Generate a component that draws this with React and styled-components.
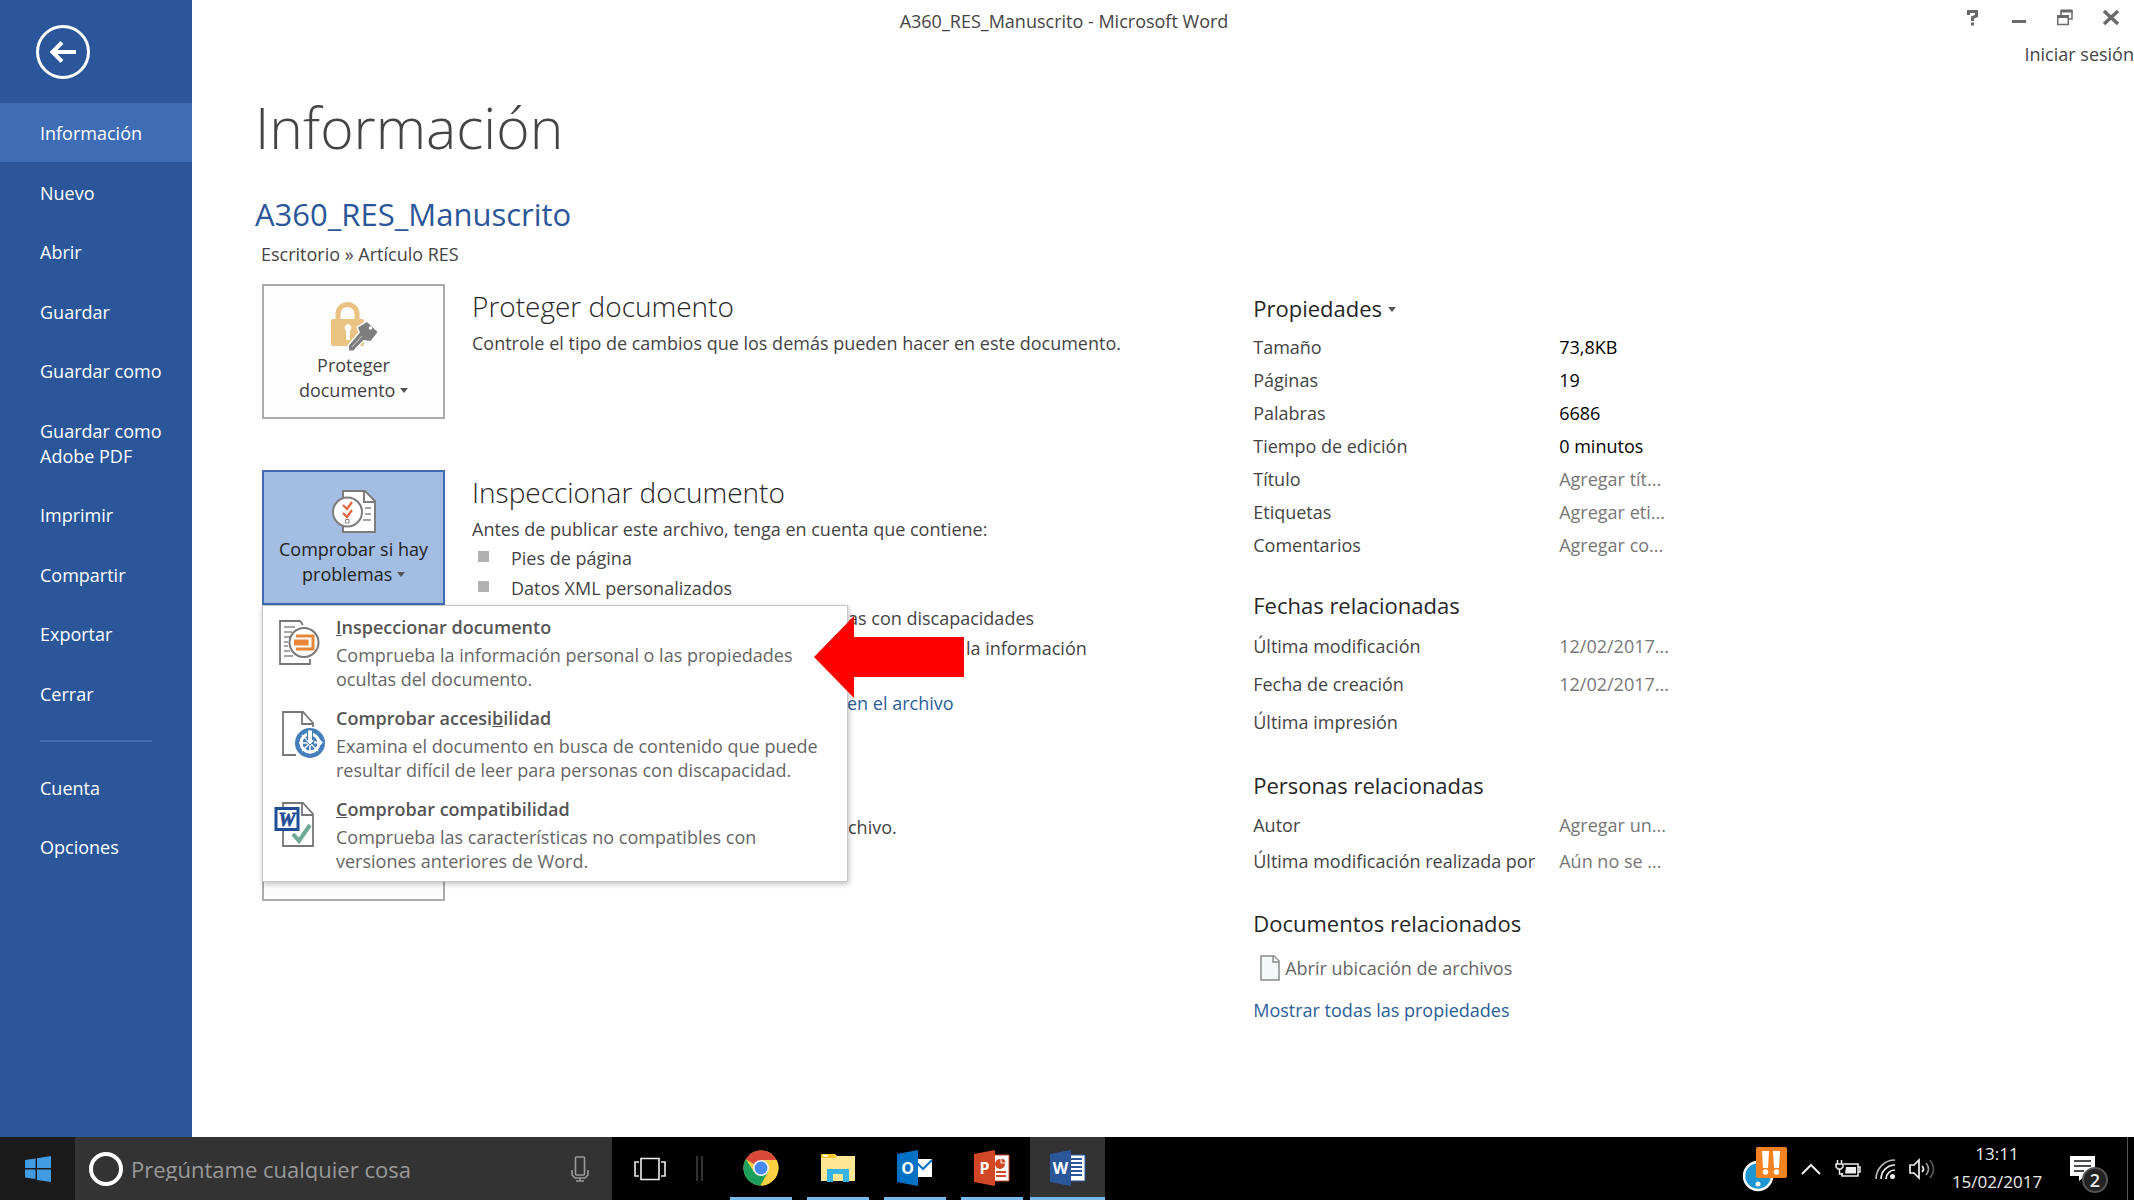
import React from 'react'
import styled, { createGlobalStyle } from 'styled-components'

const menuTop = ['Información', 'Nuevo', 'Abrir', 'Guardar', 'Guardar como', 'Guardar como Adobe PDF', 'Imprimir', 'Compartir', 'Exportar', 'Cerrar']
const menuBottom = ['Cuenta', 'Opciones']

const properties = [
  { label: 'Tamaño', value: '73,8KB' },
  { label: 'Páginas', value: '19' },
  { label: 'Palabras', value: '6686' },
  { label: 'Tiempo de edición', value: '0 minutos' },
  { label: 'Título', placeholder: 'Agregar tít...' },
  { label: 'Etiquetas', placeholder: 'Agregar eti...' },
  { label: 'Comentarios', placeholder: 'Agregar co...' },
]

const dates = [
  { label: 'Última modificación', value: '12/02/2017...', muted: true },
  { label: 'Fecha de creación', value: '12/02/2017...', muted: true },
  { label: 'Última impresión', value: '' },
]

const people = [
  { label: 'Autor', placeholder: 'Agregar un...' },
  { label: 'Última modificación realizada por', value: 'Aún no se ...', muted: true },
]

const App = () => {
  return (
    <Screen>
      <GlobalStyle />
      <Backstage>
        <Sidebar>
          <BackButton aria-label="Atrás">
            <BackIcon />
          </BackButton>
          <nav>
            <NavGroup>
              {menuTop.map((item, i) => (
                <NavItem href="#" key={item} $active={i === 0}>{item}</NavItem>
              ))}
            </NavGroup>
            <Divider />
            {menuBottom.map((item) => (
              <NavItem href="#" key={item}>{item}</NavItem>
            ))}
          </nav>
        </Sidebar>

        <Main>
          <TitleBar>
            <WindowTitle>A360_RES_Manuscrito - Microsoft Word</WindowTitle>
            <WindowTools>
              <WindowButtons>
                <WindowButton aria-label="Ayuda"><HelpIcon /></WindowButton>
                <WindowButton aria-label="Minimizar"><MinimizeIcon /></WindowButton>
                <WindowButton aria-label="Restaurar"><RestoreIcon /></WindowButton>
                <WindowButton aria-label="Cerrar ventana"><CloseIcon /></WindowButton>
              </WindowButtons>
              <SignIn href="#">Iniciar sesión</SignIn>
            </WindowTools>
          </TitleBar>

          <Page>
            <PageTitle>Información</PageTitle>
            <DocTitle>A360_RES_Manuscrito</DocTitle>
            <Path>Escritorio » Artículo RES</Path>

            <Columns>
              <Sections>
                <Section>
                  <BigButton>
                    <LockIcon />
                    <span>Proteger<br />documento <Caret /></span>
                  </BigButton>
                  <SectionText>
                    <SectionTitle>Proteger documento</SectionTitle>
                    <p>Controle el tipo de cambios que los demás pueden hacer en este documento.</p>
                  </SectionText>
                </Section>

                <Section>
                  <MenuAnchor>
                    <BigButton $open aria-expanded="true">
                      <CheckDocIcon />
                      <span>Comprobar si hay<br />problemas <Caret /></span>
                    </BigButton>
                    <Dropdown>
                      <DropdownItem>
                        <InspectIcon />
                        <span>
                          <ItemTitle><u>I</u>nspeccionar documento</ItemTitle>
                          <ItemText>Comprueba la información personal o las propiedades<br />ocultas del documento.</ItemText>
                        </span>
                      </DropdownItem>
                      <DropdownItem>
                        <AccessIcon />
                        <span>
                          <ItemTitle>Comprobar accesi<u>b</u>ilidad</ItemTitle>
                          <ItemText>Examina el documento en busca de contenido que puede<br />resultar difícil de leer para personas con discapacidad.</ItemText>
                        </span>
                      </DropdownItem>
                      <DropdownItem>
                        <CompatIcon />
                        <span>
                          <ItemTitle><u>C</u>omprobar compatibilidad</ItemTitle>
                          <ItemText>Comprueba las características no compatibles con<br />versiones anteriores de Word.</ItemText>
                        </span>
                      </DropdownItem>
                      <RedArrow viewBox="0 0 150 82" aria-hidden="true">
                        <path d="M0 41 40 0v21h110v40H40v21z" fill="#f00" />
                      </RedArrow>
                    </Dropdown>
                  </MenuAnchor>
                  <SectionText>
                    <SectionTitle>Inspeccionar documento</SectionTitle>
                    <p>Antes de publicar este archivo, tenga en cuenta que contiene:</p>
                    <IssueList>
                      <li>Pies de página</li>
                      <li>Datos XML personalizados</li>
                    </IssueList>
                    <Tail $indent={376}>as con discapacidades</Tail>
                    <Tail $indent={494}>la información</Tail>
                    <TailLink $indent={375} href="#">en el archivo</TailLink>
                  </SectionText>
                </Section>

                <Section>
                  <BigButton aria-label="Administrar versiones" />
                  <VersionText>
                    <Tail $indent={376}>chivo.</Tail>
                  </VersionText>
                </Section>
              </Sections>

              <Aside>
                <PanelButton>Propiedades <Caret /></PanelButton>
                <PropTable rows={properties} rowHeight={33} />
                <PanelTitle>Fechas relacionadas</PanelTitle>
                <PropTable rows={dates} rowHeight={38} />
                <PanelTitle>Personas relacionadas</PanelTitle>
                <PropTable rows={people} rowHeight={36} />
                <PanelTitle>Documentos relacionados</PanelTitle>
                <FileLink href="#"><FileIcon />Abrir ubicación de archivos</FileLink>
                <TextLink href="#">Mostrar todas las propiedades</TextLink>
              </Aside>
            </Columns>
          </Page>
        </Main>
      </Backstage>

      <Taskbar>
        <StartButton aria-label="Inicio"><WindowsIcon /></StartButton>
        <Search>
          <Ring />
          <SearchInput aria-label="Buscar" placeholder="Pregúntame cualquier cosa" />
          <MicIcon />
        </Search>
        <TaskView aria-label="Vista de tareas"><TaskViewIcon /></TaskView>
        <Grip />
        <Apps>
          <AppButton aria-label="Chrome"><ChromeIcon /></AppButton>
          <AppButton aria-label="Explorador de archivos"><FolderIcon /></AppButton>
          <AppButton aria-label="Outlook"><OutlookIcon /></AppButton>
          <AppButton aria-label="PowerPoint"><PowerPointIcon /></AppButton>
          <AppButton aria-label="Word" $active><WordIcon /></AppButton>
        </Apps>
        <Tray>
          <AlertIcon />
          <ChevronIcon />
          <BatteryIcon />
          <WifiIcon />
          <SpeakerIcon />
          <Clock>
            <span>13:11</span>
            <span>15/02/2017</span>
          </Clock>
          <NoticeButton aria-label="Notificaciones">
            <NoticeIcon />
            <Badge>2</Badge>
          </NoticeButton>
          <DesktopEdge />
        </Tray>
      </Taskbar>
    </Screen>
  )
}

export default App

const PropTable = ({ rows, rowHeight }) => (
  <Table $rowHeight={rowHeight}>
    <tbody>
      {rows.map(({ label, value, placeholder, muted }) => (
        <tr key={label}>
          <th scope="row">{label}</th>
          <Value $muted={muted}>
            {placeholder ? <PropInput aria-label={label} placeholder={placeholder} /> : value}
          </Value>
        </tr>
      ))}
    </tbody>
  </Table>
)

// Icons
const BackIcon = () => (
  <svg width="56" height="56" viewBox="0 0 56 56" fill="none" stroke="#fff">
    <circle cx="28" cy="28" r="25.5" strokeWidth="3" />
    <path d="M41 28H18" strokeWidth="4" />
    <path d="M27 18.500 17.500 28l9.500 9.500" strokeWidth="4" />
  </svg>
)

const HelpIcon = () => (
  <svg width="14" height="18" viewBox="0 0 14 18" fill="none" stroke="#6a6a6a" strokeWidth="3">
    <path d="M2.500 6V2.500h8v4.500L6.500 8.500v3.500" />
    <path d="M6.500 13.500v3" />
  </svg>
)

const MinimizeIcon = () => (
  <svg width="16" height="18" viewBox="0 0 16 18">
    <path d="M1 11h14v3H1z" fill="#6a6a6a" />
  </svg>
)

const RestoreIcon = () => (
  <svg width="18" height="18" viewBox="0 0 18 18" fill="none" stroke="#6a6a6a">
    <path d="M5 6V2h11v8h-4" strokeWidth="1.500" />
    <path d="M4.500 2h12" strokeWidth="3" />
    <path d="M1.800 7.500h10.500v8H1.800z" strokeWidth="1.500" />
    <path d="M1 7.500h12" strokeWidth="3" />
  </svg>
)

const CloseIcon = () => (
  <svg width="18" height="18" viewBox="0 0 18 18" stroke="#6a6a6a" strokeWidth="3.500">
    <path d="m2 2 14 13M16 2 2 15" />
  </svg>
)

const Caret = () => (
  <CaretSvg width="8" height="5" viewBox="0 0 8 5">
    <path d="M0 0h8L4 5z" fill="currentColor" />
  </CaretSvg>
)

const LockIcon = () => (
  <svg width="48" height="50" viewBox="0 0 48 50">
    <path d="M8 20v-7a9.500 9.500 0 0 1 19 0v7" fill="none" stroke="#eac282" strokeWidth="5" />
    <rect x="1" y="18" width="33" height="27" rx="2" fill="#eac282" />
    <path d="M18 23a4 4 0 0 1 2 7v9h-4v-9a4 4 0 0 1 2-7z" fill="#fff" />
    <path d="m37 21 10.500 10-7 9-7-1-8 8-2 2.500h-4.500v-5l11-13-2-5z" fill="#7d7d7d" stroke="#fdfdfd" strokeWidth="3" paintOrder="stroke" />
    <circle cx="40.500" cy="27" r="1.700" fill="#fff" />
    <path d="m22 46 10-11" stroke="#ccc" strokeWidth="1" />
  </svg>
)

const CheckDocIcon = () => (
  <svg width="46" height="46" viewBox="0 0 46 46">
    <path d="M12 2h22l10 10v31H12z" fill="#fff" stroke="#7d7d7d" strokeWidth="2" />
    <path d="M33 2v11h11" fill="none" stroke="#7d7d7d" strokeWidth="2" />
    <path d="M34 19h6M34 25h6M32 31h8" stroke="#888" strokeWidth="1.500" />
    <circle cx="16.500" cy="23" r="14.500" fill="#fff" stroke="#7d7d7d" strokeWidth="2" />
    <path d="m12 16 4 4 5-7M12 24l4 4 5-7" fill="none" stroke="#e8623d" strokeWidth="2.200" />
    <path d="M14.500 30.500h3.500v3.500h-3.500z" fill="none" stroke="#888" />
  </svg>
)

const InspectIcon = () => (
  <svg width="56" height="48" viewBox="0 0 56 48">
    <path d="M41 40v5H11V2h20l3 4" fill="#fff" stroke="#777" strokeWidth="1.800" />
    <path d="M15 8h11M15 13h8M15 18h6M15 23h4M15 27h4M15 32h6M15 37h9" stroke="#888" strokeWidth="1.500" />
    <circle cx="35" cy="23.500" r="14.500" fill="#fff" stroke="#777" strokeWidth="2" />
    <path d="M27 17h17v13H27" fill="none" stroke="#e8873a" strokeWidth="3" />
    <path d="M25 20.500h14.500v6H25z" fill="#e8873a" />
  </svg>
)

const AccessIcon = () => (
  <svg width="56" height="52" viewBox="0 0 56 52">
    <path d="M27 45H14V2h20l10 11v4" fill="none" stroke="#777" strokeWidth="1.800" />
    <path d="M33 2v12h11" fill="none" stroke="#777" strokeWidth="1.800" />
    <circle cx="41" cy="33" r="15" fill="#457fbb" />
    <circle cx="41" cy="33" r="9" fill="none" stroke="#fff" strokeWidth="3" />
    <path d="M41 33v11M41 33H30M41 33l8 8M41 33l-8 8M41 33l-8-8" stroke="#fff" strokeWidth="1.500" />
    <path d="M38.500 20h5v10h2.500l-5 5-5-5h2.500z" fill="#fff" stroke="#457fbb" />
    <path d="M45 31.500h5v-3l4 4-4 4v-3h-5z" fill="#fff" />
  </svg>
)

const CompatIcon = () => (
  <svg width="56" height="48" viewBox="0 0 56 48">
    <path d="M14 2h20l10 11v32H14z" fill="#fff" stroke="#777" strokeWidth="1.800" />
    <path d="M33 2v12h11" fill="none" stroke="#777" strokeWidth="1.800" />
    <path d="m24 33 6 7 11-16" fill="none" stroke="#6fa893" strokeWidth="4" />
    <rect x="7" y="7.500" width="22" height="21" fill="#fff" stroke="#1f4e96" strokeWidth="3" />
    <text x="18" y="24.500" textAnchor="middle" fontFamily="Liberation Serif, serif" fontStyle="italic" fontWeight="700" fontSize="19" fill="#1f4e96" stroke="#1f4e96" strokeWidth=".8">W</text>
  </svg>
)

const FileIcon = () => (
  <svg width="20" height="26" viewBox="0 0 20 26">
    <path d="M1 1h13l5 5v19H1z" fill="#f5f8f8" stroke="#8a8a8a" strokeWidth="1.500" />
    <path d="M13 1v6h6" fill="#fff" stroke="#8a8a8a" strokeWidth="1.500" />
  </svg>
)

const WindowsIcon = () => (
  <svg width="26" height="26" viewBox="0 0 26 26" fill="#429ce3">
    <path d="M0 4 10.500 2.500V12H0zM12 2.200 26 0v12H12zM0 13.500h10.500V23L0 21.500zM12 13.500h14V26l-14-2z" />
  </svg>
)

const MicIcon = () => (
  <svg width="18" height="26" viewBox="0 0 18 26" fill="none" stroke="#9a9a9a" strokeWidth="1.600">
    <rect x="4.500" y="1" width="9" height="18" rx="1" />
    <path d="M1 14v5l3 3h10l3-3v-5M9 22v3M5 25h8" />
  </svg>
)

const TaskViewIcon = () => (
  <svg width="32" height="24" viewBox="0 0 32 24" fill="none" stroke="#eee" strokeWidth="1.600">
    <path d="M7 1.500h18v21H7zM5 5H1v14h4M27 5h4v14h-4" />
  </svg>
)

const ChromeIcon = () => (
  <svg width="36" height="36" viewBox="0 0 36 36">
    <circle cx="18" cy="18" r="17.500" fill="#fdd045" />
    <path d="M18 18 2.800 9.200A17.500 17.500 0 0 1 33.500 10H18z" fill="#d9483b" />
    <path d="M2.800 9.200A17.500 17.500 0 0 0 17.500 35.500L25 22 18 18l-7 4z" fill="#1c9f5b" />
    <path d="M18 35.500A17.500 17.500 0 0 0 33.500 10H18l7.500 12z" fill="#fdd045" />
    <circle cx="18" cy="18" r="8" fill="#f4f4f4" />
    <circle cx="18" cy="18" r="6.400" fill="#4688f4" />
  </svg>
)

const FolderIcon = () => (
  <svg width="36" height="36" viewBox="0 0 36 36">
    <path d="M1 4h14l2 2h18v25H1z" fill="#ffe694" />
    <path d="M1 4h14l1 4H1z" fill="#f9c528" />
    <path d="M3 5h5v1.500H3z" fill="#fff" />
    <path d="M7 19h22v13h-6v-8H13v8H7z" fill="#34b3e4" />
  </svg>
)

const AppLetter = ({ children }) => (
  <text x="10.500" y="24" textAnchor="middle" fontFamily="Open Sans, sans-serif" fontWeight="700" fontSize="16" fill="#fff">{children}</text>
)

const OutlookIcon = () => (
  <svg width="36" height="36" viewBox="0 0 36 36">
    <path d="M20 9h15v18H20z" fill="#fff" />
    <path d="m20 13 6 6 9-9" fill="none" stroke="#0072c6" strokeWidth="2" />
    <path d="m0 4 21-4v36L0 32z" fill="#0072c6" />
    <AppLetter>O</AppLetter>
  </svg>
)

const PowerPointIcon = () => (
  <svg width="36" height="36" viewBox="0 0 36 36">
    <path d="M20 5h15v26H20z" fill="#fff" stroke="#d24726" />
    <circle cx="26" cy="14" r="5" fill="#d24726" />
    <path d="M27 13V8a5 5 0 0 1 5 5z" fill="#d24726" stroke="#fff" />
    <path d="M22 22h10M22 26h10" stroke="#d24726" strokeWidth="2" />
    <path d="m0 4 21-4v36L0 32z" fill="#d24726" />
    <AppLetter>P</AppLetter>
  </svg>
)

const WordIcon = () => (
  <svg width="36" height="36" viewBox="0 0 36 36">
    <path d="M20 5h15v26H20z" fill="#fff" stroke="#2b579a" />
    <path d="M20 9h12M20 13h12M20 17h12M20 21h12M20 25h12" stroke="#2b579a" strokeWidth="1.800" />
    <path d="m0 4 21-4v36L0 32z" fill="#2b579a" />
    <AppLetter>W</AppLetter>
  </svg>
)

const AlertIcon = () => (
  <svg width="44" height="46" viewBox="0 0 44 46">
    <circle cx="15" cy="30" r="14" fill="#1e96d2" stroke="#fff" strokeWidth="2.500" />
    <circle cx="15" cy="38" r="2.500" fill="#fff" />
    <rect x="13" y="1" width="31" height="31" rx="2" fill="#f58220" />
    <path d="M19 5h7l-1 17h-5zM30 5h7l-1 17h-5z" fill="#fff" />
    <circle cx="22.500" cy="26" r="2.800" fill="#fff" />
    <circle cx="33.500" cy="26" r="2.800" fill="#fff" />
  </svg>
)

const ChevronIcon = () => (
  <svg width="20" height="12" viewBox="0 0 20 12" fill="none" stroke="#eee" strokeWidth="2">
    <path d="m1 11 9-9 9 9" />
  </svg>
)

const BatteryIcon = () => (
  <svg width="26" height="20" viewBox="0 0 26 20" fill="none" stroke="#eee" strokeWidth="1.500">
    <path d="M9 5h14v12H7v-3M23 8h2v5h-2" />
    <path d="M11 8h10v6.500H10z" fill="#eee" stroke="none" />
    <path d="M2.500 1v4M6.500 1v4M1 5h7v3L6 10H3L1 8zM4.500 10v5H8" />
  </svg>
)

const WifiIcon = () => (
  <svg width="20" height="20" viewBox="0 0 20 20" fill="none" strokeWidth="1.700">
    <path d="M1 20A19 19 0 0 1 20 1" stroke="#bbb" />
    <path d="M6 20A14 14 0 0 1 20 6M11 20a9 9 0 0 1 9-9" stroke="#eee" />
    <circle cx="17.500" cy="17.500" r="2.500" fill="#eee" />
  </svg>
)

const SpeakerIcon = () => (
  <svg width="26" height="22" viewBox="0 0 26 22" fill="none" strokeWidth="1.700">
    <path d="M1 7h4l5-5v18l-5-5H1z" stroke="#eee" />
    <path d="M13 8q3 3 0 6" stroke="#eee" />
    <path d="M17 5q5 6 0 12" stroke="#999" />
    <path d="M21 2q7 9 0 18" stroke="#555" />
  </svg>
)

const NoticeIcon = () => (
  <svg width="26" height="26" viewBox="0 0 26 26">
    <path d="M0 0h25v20H15l-6 5v-5H0z" fill="#fff" />
    <path d="M4 5h17M4 10h17M4 15h10" stroke="#111" strokeWidth="1.600" />
  </svg>
)

// Styled Components
const GlobalStyle = createGlobalStyle`
  * {
    box-sizing: border-box;
  }

  body {
    margin: 0;
    font-family: 'Open Sans', 'Noto Sans', sans-serif;
    font-size: 18px;
    line-height: 24px;
    color: #444;
    background: #fff;
  }

  h1, h2, h3, p, ul {
    margin: 0;
    padding: 0;
    font-weight: 400;
  }

  button, input {
    font: inherit;
    color: inherit;
    border: 0;
    padding: 0;
    background: none;
  }

  a {
    text-decoration: none;
    color: inherit;
  }

  svg {
    flex: none;
  }
`

const Screen = styled.div`
  display: flex;
  flex-direction: column;
  min-height: 100vh;
`

const Backstage = styled.div`
  display: flex;
  flex: 1;
`

const Sidebar = styled.aside`
  flex: none;
  width: 192px;
  background: #2b579a;
  color: #fff;
`

const BackButton = styled.button`
  display: block;
  height: 103px;
  padding-left: 35px;

  svg {
    display: block;
  }
`

const NavGroup = styled.div`
  display: flex;
  flex-direction: column;
  justify-content: space-between;
  min-height: 620px;
`

const NavItem = styled.a`
  display: block;
  padding: 18px 24px 16px 40px;
  line-height: 25px;
  background: ${({ $active }) => ($active ? '#3e6db5' : 'transparent')};

  &:hover {
    background: #3e6db5;
  }
`

const Divider = styled.hr`
  height: 2px;
  margin: 17px 40px 16px;
  border: 0;
  background: #3e6db5;
`

const Main = styled.main`
  flex: 1;
  min-width: 0;
`

const TitleBar = styled.header`
  display: flex;
  height: 90px;
`

const WindowTitle = styled.div`
  flex: 1;
  padding-top: 9px;
  text-align: center;
`

const WindowTools = styled.div`
  width: 198px;
  padding-top: 9px;
`

const WindowButtons = styled.div`
  display: flex;
  justify-content: space-between;
  padding: 0 14px 0 28px;
`

const WindowButton = styled.button`
  display: flex;
  width: 18px;
  justify-content: center;
`

const SignIn = styled.a`
  display: block;
  margin-top: 15px;
  text-align: right;
`

const Page = styled.div`
  padding-left: 63px;
`

const PageTitle = styled.h1`
  font-size: 57px;
  font-weight: 300;
  line-height: 74px;
`

const DocTitle = styled.h2`
  margin-top: 28px;
  font-size: 31px;
  line-height: 44px;
  color: #2b579a;
`

const Path = styled.p`
  margin: 6px 0 18px 6px;
`

const Columns = styled.div`
  display: grid;
  grid-template-columns: minmax(0, 17fr) minmax(0, 15fr);
`

const Sections = styled.div`
  display: flex;
  flex-direction: column;
  gap: 51px;
  padding-left: 7px;
`

const Section = styled.section`
  display: grid;
  grid-template-columns: 183px 1fr;
  gap: 27px;
  align-items: start;
`

const BigButton = styled.button`
  display: flex;
  flex-direction: column;
  align-items: center;
  justify-content: center;
  gap: 2px;
  width: 183px;
  height: 135px;
  line-height: 25px;
  font-weight: 500;
  background: ${({ $open }) => ($open ? '#a3bde3' : '#fdfdfd')};
  color: ${({ $open }) => ($open ? '#222' : '#444')};
  border: ${({ $open }) => ($open ? '2px solid #3e6db5' : '2px solid #ababab')};
`

const CaretSvg = styled.svg`
  margin-bottom: 3px;
  vertical-align: middle;
  color: #555;
`

const SectionText = styled.div`
  padding-top: 4px;
`

const VersionText = styled.div`
  padding-top: 46px;
`

const SectionTitle = styled.h3`
  margin-bottom: 7px;
  font-size: 28px;
  font-weight: 300;
  line-height: 36px;
  color: #262626;
`

const IssueList = styled.ul`
  margin: 2px 0 0 6px;
  list-style: none;

  li {
    display: flex;
    align-items: center;
    gap: 22px;
    line-height: 30px;
  }

  li::before {
    content: '';
    width: 11px;
    height: 11px;
    margin-bottom: 4px;
    background: #b1b1b1;
  }
`

// ends of the lines that run out from behind the open menu
const Tail = styled.p`
  padding-left: ${({ $indent }) => $indent}px;
  line-height: 30px;
  white-space: nowrap;
`

const TextLink = styled.a`
  color: #2a6099;
`

const TailLink = styled(TextLink)`
  display: block;
  margin-top: 28px;
  padding-left: ${({ $indent }) => $indent}px;
`

const MenuAnchor = styled.div`
  position: relative;
`

const Dropdown = styled.div`
  position: absolute;
  z-index: 1;
  top: 100%;
  left: 0;
  display: flex;
  flex-direction: column;
  gap: 15px;
  width: 586px;
  padding: 9px 0 8px;
  background: #fff;
  border: 1px solid #c6c6c6;
  box-shadow: 1px 2px 6px rgba(0, 0, 0, 0.25);
`

const DropdownItem = styled.button`
  display: flex;
  gap: 11px;
  height: 76px;
  padding-left: 6px;
  text-align: left;
  color: #666;

  svg {
    margin-top: 4px;
  }
`

const ItemTitle = styled.span`
  display: block;
  margin-bottom: 4px;
  font-weight: 600;
  color: #555;
`

const ItemText = styled.span`
  display: block;
`

const RedArrow = styled.svg`
  position: absolute;
  top: 10px;
  left: 551px;
  width: 150px;
  height: 82px;
`

const Aside = styled.aside`
  padding-top: 8px;
`

const PanelTitle = styled.h3`
  font-size: 22px;
  line-height: 32px;
  color: #262626;
`

const PanelButton = styled.button`
  display: block;
  font-size: 22px;
  line-height: 32px;
  color: #262626;
`

const Table = styled.table`
  margin: 6px 0 28px;
  border-collapse: collapse;

  th, td {
    height: ${({ $rowHeight }) => $rowHeight}px;
    padding: 0;
    text-align: left;
    font-weight: 400;
  }

  th {
    width: 306px;
  }
`

const Value = styled.td`
  color: ${({ $muted }) => ($muted ? '#777' : '#000')};
`

const PropInput = styled.input`
  display: block;
  width: 120px;

  &::placeholder {
    color: #777;
    opacity: 1;
  }
`

const FileLink = styled.a`
  display: flex;
  align-items: center;
  gap: 5px;
  margin: 16px 0 17px 7px;
  color: #666;
`

const Taskbar = styled.footer`
  display: flex;
  align-items: stretch;
  height: 63px;
  background: #000;
  color: #eee;
`

const StartButton = styled.button`
  display: flex;
  align-items: center;
  justify-content: center;
  width: 75px;
  background: #1a1a1a;
`

const Search = styled.label`
  display: flex;
  align-items: center;
  width: 537px;
  padding: 0 23px 0 14px;
  background: #333;
`

const Ring = styled.span`
  width: 34px;
  height: 34px;
  border: 4px solid #fff;
  border-radius: 50%;
`

const SearchInput = styled.input`
  flex: 1;
  padding-left: 8px;
  font-size: 22px;

  &::placeholder {
    color: #999;
    opacity: 1;
  }
`

const TaskView = styled.button`
  display: flex;
  align-items: center;
  justify-content: center;
  width: 76px;
`

const Grip = styled.span`
  align-self: center;
  width: 7px;
  height: 25px;
  margin: 0 27px 0 8px;
  border: solid #333;
  border-width: 0 2px;
`

const Apps = styled.div`
  display: flex;
  gap: 15px;
`

const AppButton = styled.button`
  display: flex;
  align-items: center;
  justify-content: center;
  width: ${({ $active }) => ($active ? '75px' : '62px')};
  margin-left: ${({ $active }) => ($active ? '-8px' : '0')};
  padding-top: 2px;
  background: ${({ $active }) => ($active ? '#333' : 'none')};
  border-bottom: 3px solid #76b9ed;
`

const Tray = styled.div`
  display: flex;
  align-items: center;
  margin-left: auto;

  > svg {
    margin-right: 14px;
  }
`

const Clock = styled.div`
  display: flex;
  flex-direction: column;
  align-items: center;
  width: 96px;
  padding-bottom: 2px;
  font-size: 17px;
  line-height: 28px;
`

const NoticeButton = styled.button`
  position: relative;
  display: flex;
  margin: 0 31px 0 25px;
`

const Badge = styled.span`
  position: absolute;
  top: 11px;
  left: 12px;
  width: 26px;
  height: 26px;
  border: 2px solid #555;
  border-radius: 50%;
  background: #222;
  font-weight: 600;
  line-height: 22px;
  text-align: center;
`

const DesktopEdge = styled.span`
  align-self: stretch;
  width: 7px;
  border-left: 1px solid #555;
`
